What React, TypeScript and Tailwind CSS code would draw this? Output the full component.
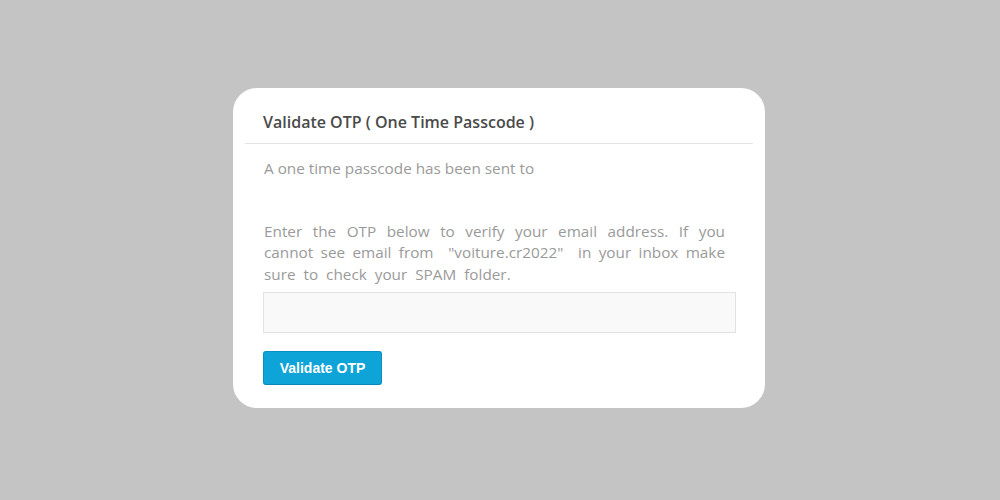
export default function App() {
  const line = "block text-justify [text-align-last:justify]";
  return (
    <div className="flex h-[500px] w-[1000px] items-center justify-center bg-[#c4c4c4]" style={{ fontFamily: '"Open Sans", "Noto Sans", sans-serif' }}>
      <div className="mb-[4px] mr-[2px] w-[532px] rounded-[24px] bg-white px-[12px] pb-[23px] pt-[21px]">
        <div className="border-b border-[#e3e3e3] px-[18px] pb-[8px]">
          <h1 className="text-[16px] font-semibold leading-[26px] text-[#4a4a4a]">Validate OTP ( One Time Passcode )</h1>
        </div>
        <div className="px-[18px]">
          <p className="mt-[14px] pl-[1px] text-[15.3px] leading-[21px] text-[#9a9a9a]">A one time passcode has been sent to</p>
          <p className="mt-[42px] pl-[1px] pr-[10px] text-[15.3px] leading-[21.5px] text-[#9a9a9a]">
            <span className={line}>Enter the OTP below to verify your email address. If you</span>
            <span className={line}>cannot see email from &nbsp;"voiture.cr2022" &nbsp;in your inbox make</span>
            <span className="block [word-spacing:4px]">sure to check your SPAM folder.</span>
          </p>
          <input className="mt-[7px] block h-[41px] w-[473px] border border-[#e2e2e2] bg-[#f9f9f9] outline-none" />
          <button className="mt-[18px] h-[34px] w-[119px] rounded-[3px] border border-[#0a8fc4] border-b-[#0887b8] bg-[#0ea4d8] text-[14px] font-bold text-white" style={{ fontFamily: '"Liberation Sans", Arial, sans-serif' }}>
            Validate OTP
          </button>
        </div>
      </div>
    </div>
  );
}
